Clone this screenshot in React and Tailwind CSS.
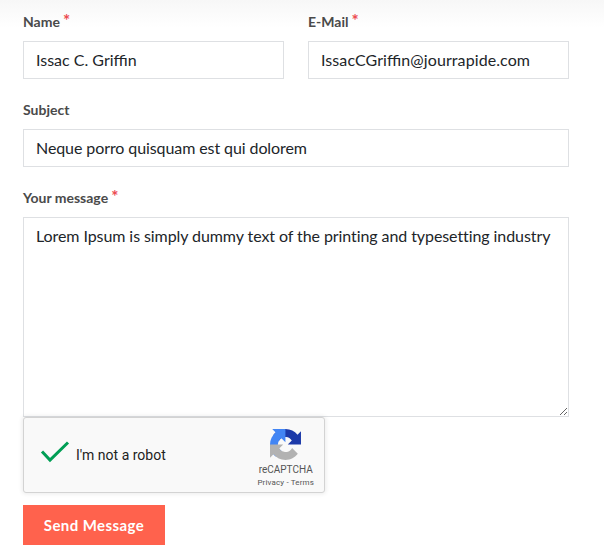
import React from "react";

function Label({ children, required, htmlFor }) {
  return (
    <label htmlFor={htmlFor} className="flex h-[21px] mb-[9px] text-sm leading-[21px] font-bold text-[#4a4a4a]">
      {children}
      {required && <span className="ml-[3px] -mt-px text-[17px] font-bold text-[#ec4a50]">*</span>}
    </label>
  );
}

const control =
  "block w-full border border-[#dee0e3] bg-white px-3 text-base leading-6 text-[#212529] outline-none";

function Field({ id, label, required, value, tracking = "" }) {
  return (
    <div className="flex-1 min-w-0">
      <Label htmlFor={id} required={required}>{label}</Label>
      <input id={id} type="text" defaultValue={value} className={`${control} h-[38px] pb-[2px] ${tracking}`} />
    </div>
  );
}

function RecaptchaLogo() {
  return (
    <svg viewBox="0 0 64 64" className="w-[31px] h-[31px]">
      <path fill="#1c3aa9" d="M64 31.955l-.033-1.370V4.687l-7.160 7.160C50.948 4.674 42.033.093 32.050.093c-10.400 0-19.622 4.960-25.458 12.640l11.736 11.860a15.550 15.550 0 0 1 4.754-5.334c2.050-1.600 4.952-2.906 8.968-2.906.485 0 .860.057 1.135.163 4.976.393 9.288 3.140 11.828 7.124l-8.307 8.307L64 31.953" />
      <path fill="#4285f4" d="M31.862.094l-1.370.033H4.594l7.160 7.160C4.580 13.147 0 22.060 0 32.046c0 10.400 4.960 19.622 12.640 25.458L24.500 45.768a15.550 15.550 0 0 1-5.334-4.754c-1.600-2.050-2.906-4.952-2.906-8.968 0-.485.057-.860.163-1.135.393-4.976 3.140-9.288 7.124-11.828l8.307 8.307L31.860.095" />
      <path fill="#b2b2b2" d="M.001 32.045l.033 1.370v25.898l7.160-7.160c5.860 7.173 14.774 11.754 24.760 11.754 10.400 0 19.622-4.960 25.458-12.640l-11.736-11.860a15.550 15.550 0 0 1-4.754 5.334c-2.050 1.600-4.952 2.906-8.968 2.906-.485 0-.860-.057-1.135-.163-4.976-.393-9.288-3.140-11.828-7.124l8.307-8.307c-10.522.040-22.400.066-27.295-.005" />
    </svg>
  );
}

function Recaptcha() {
  return (
    <div className="flex w-[302px] h-[76px] rounded-[3px] border border-[#d3d3d3] bg-[#f9f9f9] shadow-[0_0_4px_1px_rgba(0,0,0,0.08)] [font-family:Roboto,sans-serif]">
      <svg viewBox="0 0 30 24" className="w-[30px] h-6 ml-4 mt-[22px]" fill="none" stroke="#009e55" strokeWidth="3">
        <path d="M2 11.500 10 20 28 2.500" />
      </svg>
      <span className="ml-[6px] mt-[29px] text-sm leading-[17px] text-[#222]">I'm not a robot</span>
      <div className="flex flex-col items-center ml-auto mr-[10px] pt-[11px] text-[#555]">
        <RecaptchaLogo />
        <span className="mt-[4px] text-[10px] leading-[12px]">reCAPTCHA</span>
        <span className="mt-[2px] text-[8px] leading-[10px] tracking-[0.15px]">Privacy - Terms</span>
      </div>
    </div>
  );
}

export default function App() {
  return (
    <div className="h-[559px] overflow-hidden bg-white [font-family:Lato,sans-serif]">
      <form className="flex flex-col h-full pl-[23px] pr-[35px] pt-[11px] bg-[linear-gradient(#f7f7f7,#ffffff_28px)]">
        <div className="flex gap-6">
          <Field id="name" label="Name" required value="Issac C. Griffin" />
          <Field
            id="email"
            label="E-Mail"
            required
            value="IssacCGriffin@jourrapide.com"
            tracking="tracking-[0.09px] [font-feature-settings:'liga'_1]"
          />
        </div>
        <div className="flex mt-5">
          <Field id="subject" label="Subject" value="Neque porro quisquam est qui dolorem" tracking="tracking-[-0.09px]" />
        </div>
        <div className="mt-5">
          <Label htmlFor="message" required>Your message</Label>
          <textarea
            id="message"
            defaultValue="Lorem Ipsum is simply dummy text of the printing and typesetting industry"
            className={`${control} h-[200px] py-[6px] resize tracking-[-0.08px]`}
          />
        </div>
        <Recaptcha />
        <button type="button" className="mt-3 w-[142px] h-10 bg-[#ff624d] text-[15px] font-bold tracking-[0.42px] text-white">
          Send Message
        </button>
      </form>
    </div>
  );
}
